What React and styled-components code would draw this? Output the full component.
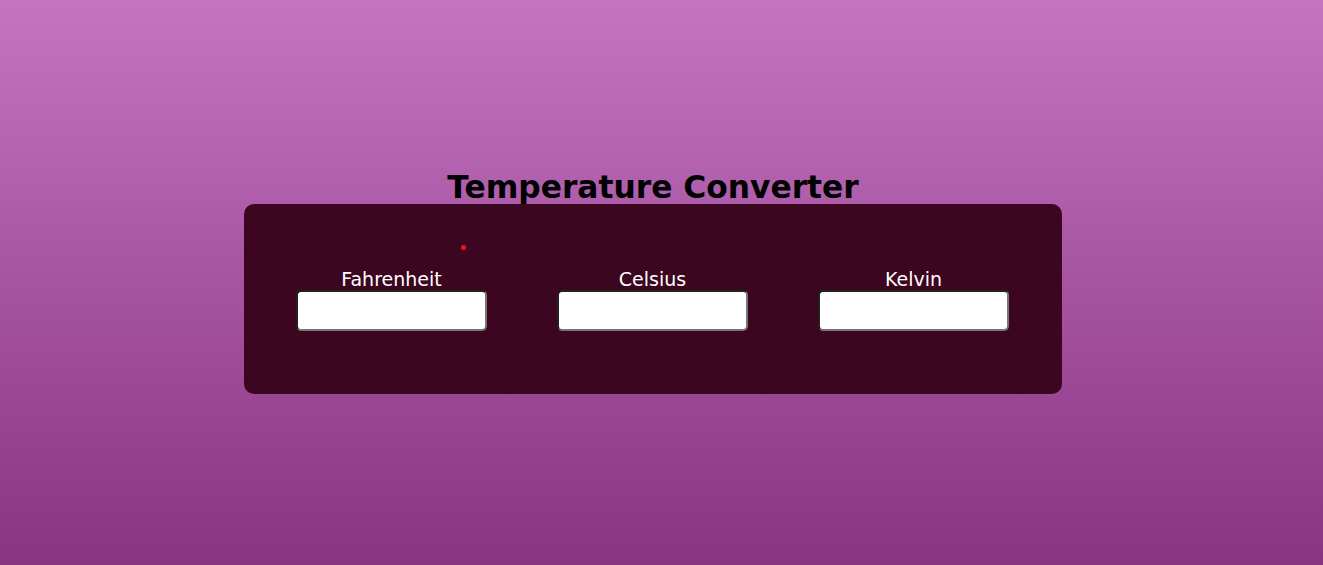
import styled, { createGlobalStyle } from "styled-components";

const GlobalStyle = createGlobalStyle`
  html, body {
    margin: 0;
    padding: 0;
  }
  body {
    font-family: "DejaVu Sans", Verdana, sans-serif;
    background: linear-gradient(to bottom, #c574c1, #873582);
    min-height: 100vh;
  }
`;

const Page = styled.div`
  height: 565px;
  box-sizing: border-box;
  padding: 0 17px 3px 0;
  display: flex;
  flex-direction: column;
  align-items: center;
  justify-content: center;
`;

const Title = styled.h1`
  margin: 0 0 -1px;
  font-size: 31.3px;
  line-height: 36px;
  font-weight: bold;
  color: #000;
`;

const Card = styled.div`
  width: 818px;
  box-sizing: border-box;
  background: #3c0620;
  border-radius: 10px;
  padding: 41px 18px 63px 17px;
`;

const Status = styled.div`
  height: 5px;
  margin-bottom: 18px;
  padding-left: 200px;
`;

const Dot = styled.span`
  display: block;
  width: 5px;
  height: 5px;
  border-radius: 50%;
  background: #e8161c;
`;

const Fields = styled.div`
  display: grid;
  grid-template-columns: repeat(3, 1fr);
`;

const Field = styled.label`
  display: flex;
  flex-direction: column;
  align-items: center;
  color: #fff;
  font-size: 19px;
  line-height: 22px;
`;

const Input = styled.input`
  margin: 0;
  width: 191px;
  height: 41px;
  box-sizing: border-box;
  border: 2px inset #767676;
  border-radius: 5px;
  background: #fff;
  font-size: 16px;
  padding: 0 6px;
`;

const units = ["Fahrenheit", "Celsius", "Kelvin"];

export default function App() {
  return (
    <>
      <GlobalStyle />
      <Page>
        <Title>Temperature Converter</Title>
        <Card>
          <Status>
            <Dot />
          </Status>
          <Fields>
            {units.map((u) => (
              <Field key={u}>
                {u}
                <Input type="text" />
              </Field>
            ))}
          </Fields>
        </Card>
      </Page>
    </>
  );
}
